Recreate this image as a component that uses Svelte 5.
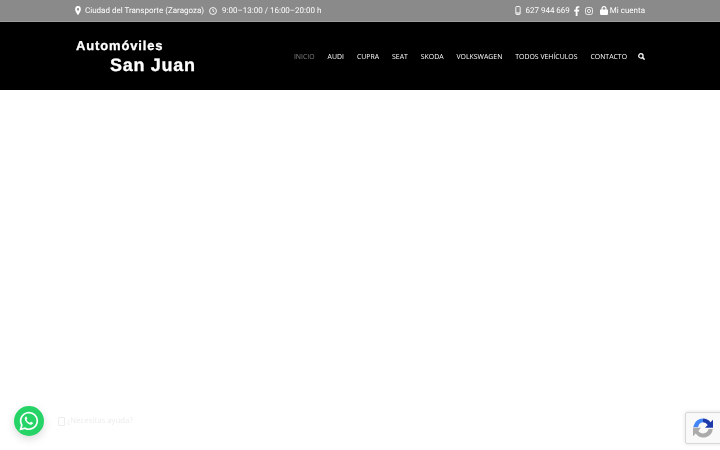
<script lang="ts">
  const nav = ['Inicio', 'Audi', 'Cupra', 'Seat', 'Skoda', 'Volkswagen', 'Todos vehículos', 'Contacto']
</script>

<div class="page">
  <div class="topbar">
    <div class="wrap topbar-row">
      <div class="group">
        <span class="item">
          <svg class="ico" width="6" height="9" viewBox="0 0 8 10" preserveAspectRatio="none"><path fill="#fff" fill-rule="evenodd" d="M4 0a3.800 3.800 0 0 0-3.800 3.800C.2 6.200 4 10 4 10s3.800-3.800 3.800-6.200A3.800 3.800 0 0 0 4 0zm0 5.200a1.500 1.500 0 1 1 0-3 1.500 1.500 0 0 1 0 3z"/></svg>
          Ciudad del Transporte (Zaragoza)
        </span>
        <span class="item wide">
          <svg class="ico" width="8" height="8" viewBox="0 0 9 9" fill="none" stroke="#fff"><circle cx="4.500" cy="4.500" r="3.900"/><path d="M4.500 2.200v2.400l1.600 1"/></svg>
          9:00–13:00 / 16:00–20:00 h
        </span>
      </div>
      <div class="group right">
        <span class="item">
          <svg class="ico" width="6" height="9" viewBox="0 0 6 10" fill="none" stroke="#fff"><rect x=".6" y=".6" width="4.800" height="8.800" rx=".8"/><path d="M.6 7.800h4.800" stroke-width="1.200"/></svg>
          627 944 669
        </span>
        <svg class="ico fb" width="6" height="10" viewBox="0 0 6 10"><path fill="#fff" d="M1.700 10V5.500H.2V3.800h1.500V2.500C1.700 1 2.600.2 3.900.2c.6 0 1.200 0 1.400.1v1.500h-.9c-.7 0-.9.4-.9.9v1.100h1.700l-.2 1.700H3.500V10z"/></svg>
        <svg class="ico insta" width="8" height="8" viewBox="0 0 8 8" fill="none" stroke="#fff" stroke-width=".8"><rect x=".5" y=".5" width="7" height="7" rx="2"/><circle cx="4" cy="4" r="1.600"/></svg>
        <span class="item tight">
          <svg class="ico" width="8" height="9" viewBox="0 0 8 9"><path fill="#fff" d="M1.500 3.500V2.600a2.500 2.500 0 0 1 5 0v.9h.6c.4 0 .9.3.9.8v3.800c0 .5-.5.9-.9.9H.9C.5 9 0 8.600 0 8.100V4.300c0-.5.5-.8.9-.8zm1.100 0h2.800V2.600a1.400 1.400 0 0 0-2.800 0z"/></svg>
          Mi cuenta
        </span>
      </div>
    </div>
  </div>

  <header class="header">
    <div class="wrap header-row">
      <div class="logo">
        <div class="logo-a">Automóviles</div>
        <div class="logo-b">San Juan</div>
      </div>
      <nav class="nav">
        {#each nav as n, i}
          <span class="link" class:active={i === 0}>{n}</span>
        {/each}
        <svg class="search" width="7" height="7" viewBox="0 0 8 8" fill="none" stroke="#fff" stroke-width="1.400"><circle cx="3.300" cy="3.300" r="2.500"/><path d="M5.200 5.200 7.500 7.500" stroke-width="1.700"/></svg>
      </nav>
    </div>
  </header>

  <div class="wa">
    <svg width="20" height="20" viewBox="0 0 20 20"><path fill="none" stroke="#fff" stroke-width="1.700" d="M1.600 18.400l1.200-4.300A8.300 8.300 0 1 1 6 17.200z"/><path fill="#fff" d="M7.300 5.600c-.3 0-.6.1-.9.5-.4.5-.8 1.200-.6 2.200.3 1.300 1.100 2.500 2.200 3.500 1.100 1 2.300 1.700 3.500 1.900 1 .1 1.800-.3 2.200-.9.3-.4.3-.9.2-1.100l-1.800-.9c-.2-.1-.3 0-.4.1l-.6.8c-.1.1-.3.1-.4.1-1.400-.6-2.400-1.500-3.100-2.800-.1-.2 0-.3.1-.4l.5-.6c.1-.1.1-.3.1-.4l-.7-1.700c-.1-.2-.2-.3-.3-.3z"/></svg>
  </div>
  <div class="wa-label"><span class="wa-box"></span>¿Necesitas ayuda?</div>

  <div class="recaptcha">
    <svg width="24" height="24" viewBox="0 0 24 24" fill="none">
      <path d="M12 2.500a9.500 9.500 0 0 1 7.500 3.700L22 3.700v8h-8l2.700-2.700A5.800 5.800 0 0 0 12 6.200z" fill="#1c3aa9"/>
      <path d="M12 2.500A9.500 9.500 0 0 0 3 9l-.8 2.200H7l.6-1.800A5 5 0 0 1 12 6.200z" fill="#4285f4"/>
      <path d="M2 11.800v8.500l2.700-2.700A9.500 9.500 0 0 0 21.800 13h-4.200a5.800 5.800 0 0 1-10.300 2l2.700-3.200z" fill="#ababab"/>
    </svg>
  </div>
</div>

<style>
  :global(body) {
    margin: 0;
    background: #fff;
  }

  .page {
    width: 720px;
    height: 450px;
    overflow: hidden;
    position: relative;
    background: #fff;
    font-family: Roboto, sans-serif;
    text-rendering: geometricPrecision;
    filter: blur(0.3px);
  }

  .wrap {
    width: 570px;
    margin: 0 auto;
  }

  .topbar {
    height: 22px;
    background: #8a8a8a;
    border-bottom: 1px solid #9c9c9c;
    box-sizing: border-box;
    color: #fff;
    font-size: 8px;
  }

  .topbar-row {
    height: 21px;
    display: flex;
    align-items: center;
    justify-content: space-between;
  }

  .group {
    display: flex;
    align-items: center;
    gap: 5px;
  }

  .fb {
    margin-left: -1px;
  }

  .insta {
    margin-right: 2px;
  }

  .item {
    display: flex;
    align-items: center;
    gap: 4px;
    white-space: nowrap;
  }

  .item.wide {
    gap: 5px;
  }

  .item.tight {
    gap: 2px;
  }

  .ico {
    flex-shrink: 0;
  }

  .header {
    height: 68px;
    background: #000;
  }

  .header-row {
    height: 100%;
    display: flex;
    align-items: center;
    justify-content: space-between;
  }

  .logo {
    color: #fff;
    font-family: 'Liberation Sans', Arial, sans-serif;
    font-weight: 700;
    padding-left: 1px;
    -webkit-text-stroke: 0.3px #fff;
  }

  .logo-a {
    font-size: 13px;
    line-height: 17px;
    letter-spacing: 0.85px;
  }

  .logo-b {
    font-size: 18px;
    line-height: 22px;
    letter-spacing: 0.7px;
    padding-left: 34px;
  }

  .nav {
    display: flex;
    align-items: center;
    gap: 13px;
    font-family: 'Open Sans', sans-serif;
    font-size: 6.900px;
    color: #fff;
    text-transform: uppercase;
  }

  .link {
    padding-top: 2px;
  }

  .link.active {
    color: #808080;
  }

  .search {
    margin-left: -2px;
  }

  .wa {
    position: absolute;
    left: 14px;
    top: 406px;
    width: 30px;
    height: 30px;
    border-radius: 50%;
    background: #25d366;
    box-shadow: 0 3px 8px rgba(0, 0, 0, 0.15);
    display: flex;
    align-items: center;
    justify-content: center;
  }

  .wa-label {
    position: absolute;
    left: 58px;
    top: 416px;
    display: flex;
    align-items: center;
    gap: 2px;
    font-family: 'Open Sans', sans-serif;
    font-size: 7.800px;
    color: #ececec;
  }

  .wa-box {
    width: 5px;
    height: 7px;
    border: 1px solid #ececec;
    border-radius: 1px;
  }

  .recaptcha {
    position: absolute;
    left: 685px;
    top: 412px;
    width: 40px;
    height: 32px;
    background: #f9f9f9;
    border: 1px solid #d8d8d8;
    border-radius: 2px;
    box-shadow: 0 0 4px rgba(0, 0, 0, 0.12);
    display: flex;
    align-items: center;
    padding-left: 5px;
    box-sizing: border-box;
  }
</style>
